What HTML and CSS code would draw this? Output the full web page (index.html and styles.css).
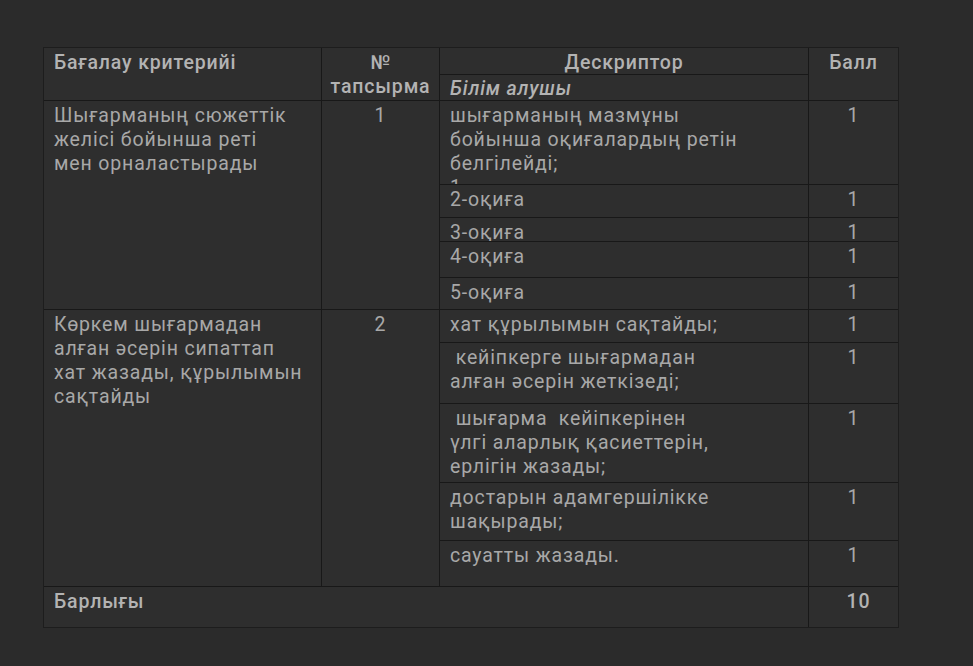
FILE: index.html
```html
<!DOCTYPE html>
<html lang="kk">
<head>
<meta charset="utf-8">
<title>Бағалау критерийі</title>
<link rel="stylesheet" href="styles.css">
</head>
<body>
<div class="sheet">
  <div class="cell head span2">Бағалау критерийі</div>
  <div class="cell head center num span2">№<br>тапсырма</div>
  <div class="cell head center">Дескриптор</div>
  <div class="cell head center span2">Балл</div>
  <div class="cell head italic">Білім алушы</div>

  <div class="cell span5">Шығарманың сюжеттік<br>желісі бойынша реті<br>мен орналастырады</div>
  <div class="cell center num span5">1</div>
  <div class="cell">шығарманың мазмұны<br>бойынша оқиғалардың ретін<br>белгілейді;<br>1</div>
  <div class="cell center">1</div>
  <div class="cell">2-оқиға</div>
  <div class="cell center">1</div>
  <div class="cell">3-оқиға</div>
  <div class="cell center">1</div>
  <div class="cell">4-оқиға</div>
  <div class="cell center">1</div>
  <div class="cell">5-оқиға</div>
  <div class="cell center">1</div>

  <div class="cell span5">Көркем шығармадан<br>алған әсерін сипаттап<br>хат жазады, құрылымын<br>сақтайды</div>
  <div class="cell center num span5">2</div>
  <div class="cell">хат құрылымын сақтайды;</div>
  <div class="cell center">1</div>
  <div class="cell">&nbsp;кейіпкерге шығармадан<br>алған әсерін жеткізеді;</div>
  <div class="cell center">1</div>
  <div class="cell">&nbsp;шығарма &nbsp;кейіпкерінен<br>үлгі аларлық қасиеттерін,<br>ерлігін жазады;</div>
  <div class="cell center">1</div>
  <div class="cell">достарын адамгершілікке<br>шақырады;</div>
  <div class="cell center">1</div>
  <div class="cell">сауатты жазады.</div>
  <div class="cell center">1</div>

  <div class="cell head total">Барлығы</div>
  <div class="cell head center total-value">10</div>
</div>
</body>
</html>
```
FILE: styles.css
```css
html, body {
  margin: 0;
  padding: 0;
  background: #2b2b2b;
}

body {
  padding: 47px 0 0 43px;
  font-family: Roboto, "Noto Sans", "Liberation Sans", sans-serif;
  font-size: 19.5px;
  letter-spacing: 0.85px;
  line-height: 24px;
  color: #a8a8a8;
}

.sheet {
  display: grid;
  grid-template-columns: 277px 117px 368px 89px;
  grid-template-rows: 26px 25px 83px 32px 23px 35px 31px 32px 60px 78px 57px 45px 40px;
  gap: 1px;
  width: max-content;
  background: #181818;
  border: 1px solid #1d1d1d;
}

.cell {
  background: #2e2e2e;
  padding: 3px 10px 0 10px;
  overflow: hidden;
  white-space: nowrap;
}

.head {
  font-weight: 500;
  color: #b3b3b3;
}

.center {
  text-align: center;
}

.num {
  padding-left: 0;
  padding-right: 0;
}

.italic {
  font-style: italic;
  padding-top: 2px;
}

.span2 {
  grid-row: span 2;
}

.span5 {
  grid-row: span 5;
}

.total {
  grid-column: span 3;
  padding-top: 3px;
}

.total-value {
  padding-top: 3px;
  padding-left: 20px;
}
```
